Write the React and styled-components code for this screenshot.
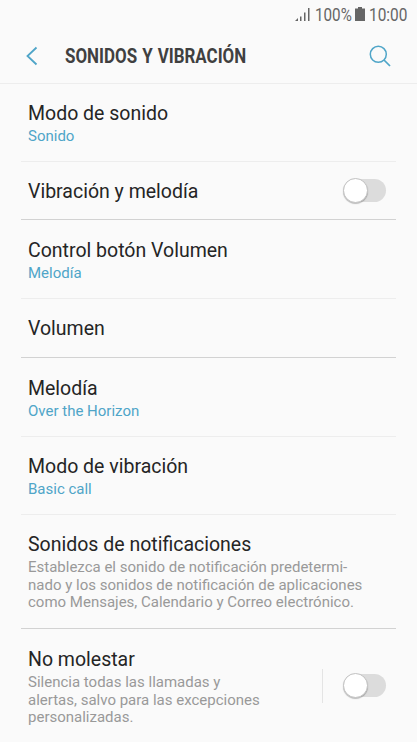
import { useState } from "react";
import styled, { createGlobalStyle } from "styled-components";

const GlobalStyle = createGlobalStyle`
  * {
    box-sizing: border-box;
  }

  body {
    margin: 0;
    background: #fafafa;
    overflow: hidden;
  }

  body, button {
    font-family: Roboto, "Liberation Sans", sans-serif;
  }
`;

const Screen = styled.div`
  width: 417px;
  height: 742px;
  overflow: hidden;
  background: #fafafa;
`;

const StatusBar = styled.div`
  display: flex;
  justify-content: flex-end;
  height: 28px;
  padding: 4px 9px 0 0;
  color: #666;
`;

const StatusText = styled.span`
  width: ${({ $width }) => $width}px;
  font-size: 19px;
  line-height: 21px;
  white-space: nowrap;
  transform: scaleX(${({ $scale }) => $scale});
  transform-origin: left;
`;

const SignalIcon = styled.svg`
  width: 16px;
  height: 15px;
  margin: 3px 4px 0 0;
`;

const BatteryIcon = styled.svg`
  width: 10px;
  height: 14px;
  margin: 3px 4px 0 0;
`;

const Header = styled.header`
  display: flex;
  align-items: center;
  height: 56px;
  padding: 0 26px;
  border-bottom: 1px solid #ededed;
`;

const IconButton = styled.button`
  display: flex;
  padding: 0;
  border: 0;
  background: none;
  color: #4fa5c8;
`;

const Title = styled.h1`
  flex: 1;
  margin: 3px 0 0 27px;
  color: #404040;
  font-size: 19.5px;
  font-weight: 700;
  line-height: 24px;
  white-space: nowrap;
  word-spacing: 1px;
  transform: scaleX(0.868);
  transform-origin: left;
`;

const List = styled.ul`
  margin: 0;
  padding: 0 21px;
  list-style: none;
`;

const Row = styled.li`
  display: flex;
  height: ${({ $height }) => $height}px;
  padding: ${({ $pad }) => $pad || 18}px 10px 0 7px;
  border-bottom: 1px solid ${({ $strong }) => ($strong ? "#d2d2d2" : "#ededed")};

  &:last-child {
    border-bottom: 0;
  }
`;

const RowText = styled.div`
  flex: 1;
`;

const RowTitle = styled.div`
  color: #252525;
  font-size: 19.5px;
  line-height: 24px;
  white-space: nowrap;
`;

const RowValue = styled.div`
  margin-top: 2px;
  color: #4fa5c8;
  font-size: 15px;
  line-height: 17.5px;
  white-space: nowrap;
`;

const RowHint = styled(RowValue)`
  color: #999;
  white-space: pre;
`;

const Separator = styled.div`
  width: 1px;
  height: 34px;
  margin: 21px 20px 0 0;
  background: #e4e4e4;
`;

const Toggle = styled.button`
  width: 43px;
  height: 26px;
  margin-top: ${({ $top }) => $top}px;
  padding: 0;
  border: 0;
  background: none;
`;

const Track = styled.span`
  display: flex;
  align-items: center;
  justify-content: ${({ $on }) => ($on ? "flex-end" : "flex-start")};
  width: 42px;
  height: 23px;
  margin-left: 1px;
  border-radius: 12px;
  background: ${({ $on }) => ($on ? "#a5d3e5" : "#dcdcdc")};
`;

const Thumb = styled.span`
  flex: none;
  width: 25px;
  height: 25px;
  margin: 0 -1px;
  border: 1px solid #c2c2c2;
  border-radius: 50%;
  background: #fff;
  box-shadow: 0 1px 1px rgba(0, 0, 0, 0.25);
`;

const rows = [
  { title: "Modo de sonido", value: "Sonido", height: 78 },
  { title: "Vibración y melodía", height: 58, strong: true, toggle: true },
  { title: "Control botón Volumen", value: "Melodía", height: 79, pad: 19 },
  { title: "Volumen", height: 59, strong: true },
  { title: "Melodía", value: "Over the Horizon", height: 79, pad: 18.5 },
  { title: "Modo de vibración", value: "Basic call", height: 78 },
  {
    title: "Sonidos de notificaciones",
    hint: "Establezca el sonido de notificación predetermi-\nnado y los sonidos de notificación de aplicaciones\ncomo Mensajes, Calendario y Correo electrónico.",
    height: 114,
    strong: true,
  },
  {
    title: "No molestar",
    hint: "Silencia todas las llamadas y\nalertas, salvo para las excepciones\npersonalizadas.",
    height: 113,
    pad: 19,
    toggle: true,
  },
];

const Switch = ({ top, label }) => {
  const [on, setOn] = useState(false);

  return (
    <Toggle
      role="switch"
      aria-checked={on}
      aria-label={label}
      $top={top}
      onClick={() => setOn(!on)}
    >
      <Track $on={on}>
        <Thumb />
      </Track>
    </Toggle>
  );
};

const App = () => {
  return (
    <Screen>
      <GlobalStyle />
      <StatusBar>
        <SignalIcon viewBox="0 0 16 15" fill="currentColor">
          <path d="M0 14 3 11V14Z" />
          <path d="M5 9.5h1.5V14H5ZM9 5.5h1.5V14H9ZM13 1h1.5v13H13Z" />
        </SignalIcon>
        <StatusText $width={40} $scale={0.8}>
          100%
        </StatusText>
        <BatteryIcon viewBox="0 0 10 14" fill="currentColor">
          <path d="M3 0h4v1.5h3V14H0V1.5h3Z" />
        </BatteryIcon>
        <StatusText $width={39} $scale={0.81}>
          10:00
        </StatusText>
      </StatusBar>
      <Header>
        <IconButton aria-label="Atrás">
          <svg width="12" height="20" viewBox="0 0 12 20" fill="none">
            <path d="M10.5 1.5 1.5 10l9 8.5" stroke="currentColor" strokeWidth="1.8" />
          </svg>
        </IconButton>
        <Title>SONIDOS Y VIBRACIÓN</Title>
        <IconButton aria-label="Buscar">
          <svg width="22" height="22" viewBox="0 0 22 22" fill="none">
            <circle cx="9.3" cy="9.3" r="8" stroke="currentColor" strokeWidth="1.5" />
            <path d="m15 15 6 6" stroke="currentColor" strokeWidth="1.7" />
          </svg>
        </IconButton>
      </Header>
      <List>
        {rows.map(({ title, value, hint, height, pad, strong, toggle }) => (
          <Row key={title} $height={height} $pad={pad} $strong={strong}>
            <RowText>
              <RowTitle>{title}</RowTitle>
              {value && <RowValue>{value}</RowValue>}
              {hint && <RowHint>{hint}</RowHint>}
            </RowText>
            {toggle && hint && <Separator />}
            {toggle && <Switch label={title} top={hint ? 24 : -3} />}
          </Row>
        ))}
      </List>
    </Screen>
  );
};

export default App;
